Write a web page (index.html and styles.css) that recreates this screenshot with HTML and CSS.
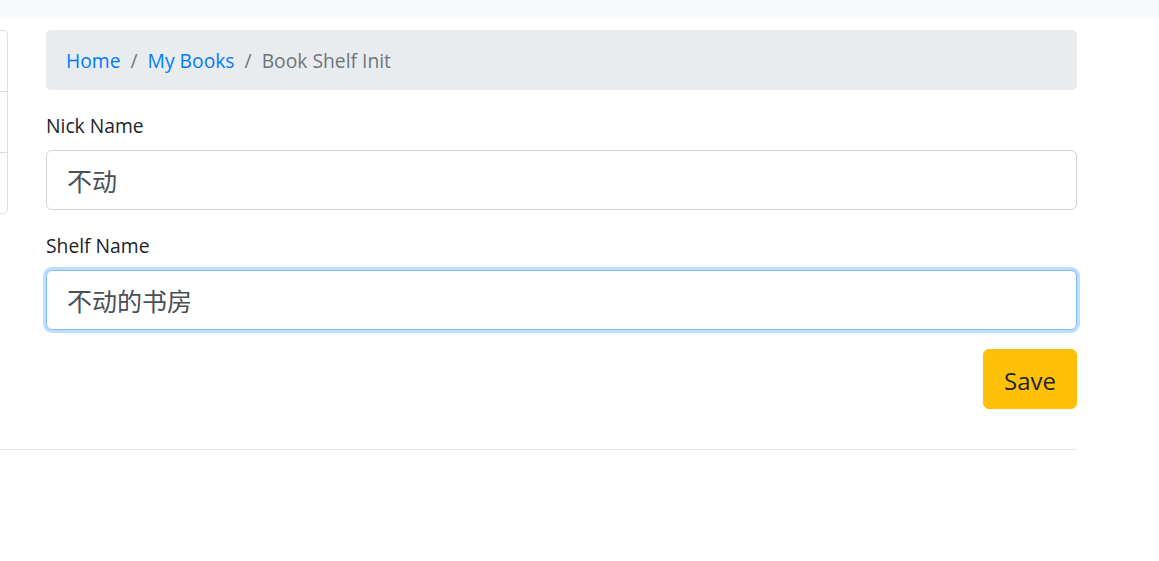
FILE: index.html
```html
<!DOCTYPE html>
<html lang="en">
<head>
<meta charset="utf-8">
<title>Book Shelf Init</title>
<link rel="stylesheet" href="styles.css">
</head>
<body>
<div class="topbar"></div>
<div class="page">
  <div class="layout">
    <aside class="sidebar">
      <div class="side-item"></div>
      <div class="side-item"></div>
      <div class="side-item"></div>
    </aside>
    <main class="main">
      <nav class="breadcrumb">
        <a class="crumb link" href="#">Home</a>
        <span class="sep">/</span>
        <a class="crumb link" href="#">My Books</a>
        <span class="sep">/</span>
        <span class="crumb active">Book Shelf Init</span>
      </nav>
      <form class="form">
        <div class="form-group">
          <label class="label">Nick Name</label>
          <input class="input" type="text" value="不动">
        </div>
        <div class="form-group">
          <label class="label">Shelf Name</label>
          <input class="input focused" type="text" value="不动的书房">
        </div>
        <div class="actions">
          <button class="btn-save" type="button">Save</button>
        </div>
      </form>
    </main>
  </div>
  <hr class="divider">
</div>
</body>
</html>
```
FILE: styles.css
```css
* { box-sizing: border-box; }
html, body { margin: 0; padding: 0; background: #fff; }
body {
  font-family: "Open Sans", "Noto Sans CJK SC", sans-serif;
  font-size: 19.3px;
  line-height: 30px;
  color: #212529;
}
.topbar {
  height: 18px;
  background: #f8f9fa;
}
.page {
  width: 1077px;
  padding-top: 12px;
}
.layout {
  display: flex;
  gap: 38px;
  align-items: flex-start;
}
.sidebar {
  width: 8px;
  border: 1px solid rgba(0,0,0,.125);
  border-left: none;
  border-radius: 0 5px 5px 0;
}
.side-item {
  height: 60px;
}
.side-item + .side-item {
  border-top: 1px solid rgba(0,0,0,.125);
  height: 61px;
}
.main {
  width: 1031px;
}
.breadcrumb {
  display: flex;
  align-items: center;
  height: 60px;
  padding: 2px 20px 0;
  background: #e9ecef;
  border-radius: 5px;
  margin-bottom: 20px;
}
.crumb { text-decoration: none; }
.link { color: #007bff; }
.active { color: #6c757d; }
.sep { color: #6c757d; padding: 0 10px; }
.form-group { margin-bottom: 20px; }
.label {
  display: block;
  margin-bottom: 10px;
  padding-top: 1px;
  height: 30px;
  line-height: 30px;
}
.input {
  display: block;
  width: 100%;
  height: 60px;
  padding: 0 20px;
  font-family: "Open Sans", "Noto Sans CJK SC", sans-serif;
  font-size: 25px;
  color: #495057;
  background: #fff;
  border: 1px solid #ced4da;
  border-radius: 6px;
  outline: none;
}
.input.focused {
  border-color: #80bdff;
  box-shadow: 0 0 0 3px rgba(0,123,255,.25);
}
.actions {
  display: flex;
  justify-content: flex-end;
  margin-top: -1px;
}
.btn-save {
  height: 60px;
  padding: 2px 20px 0;
  font-family: "Open Sans", sans-serif;
  font-size: 24px;
  color: #212529;
  background: #ffc107;
  border: 1px solid #ffc107;
  border-radius: 6px;
}
.divider {
  margin: 40px 0 0;
  border: 0;
  border-top: 1px solid rgba(0,0,0,.1);
}
```
